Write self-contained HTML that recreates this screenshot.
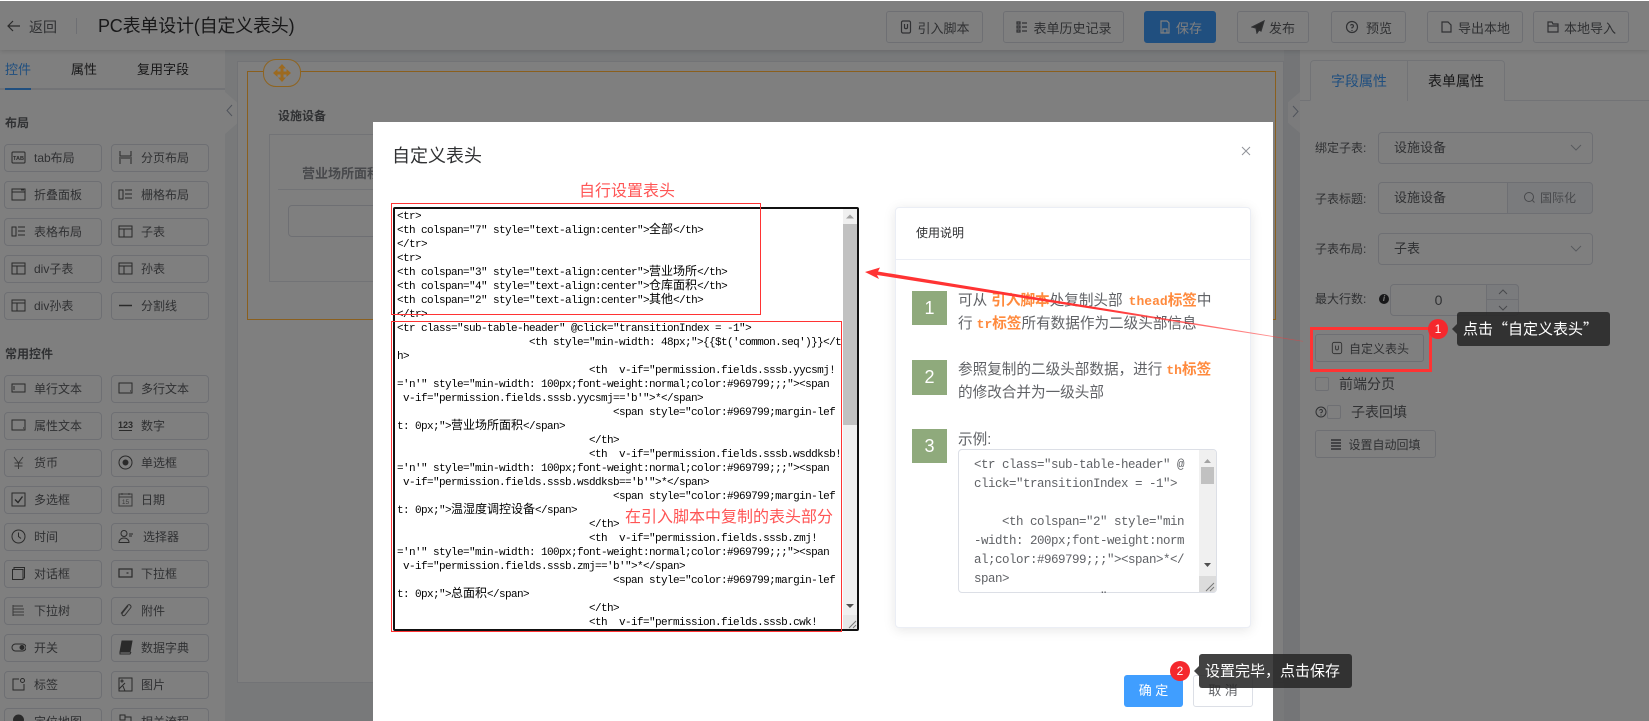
<!DOCTYPE html>
<html lang="zh">
<head>
<meta charset="utf-8">
<title>PC表单设计</title>
<style>
*{box-sizing:border-box}
html,body{margin:0;padding:0;width:1649px;height:721px;overflow:hidden;background:#f0f2f5}
body{position:relative;font-family:"Liberation Sans","Noto Sans CJK SC",sans-serif;color:#606266;font-size:12px}
.a{position:absolute;white-space:nowrap}
.hb{position:absolute;top:11px;height:32px;border:1px solid #dcdfe6;border-radius:3px;background:#fff;display:flex;align-items:center;justify-content:center;font-size:13px;color:#606266;white-space:nowrap}
.hb svg{width:14px;height:14px;margin-right:4px;fill:none;stroke:#606266;stroke-width:1.2}
.it{position:absolute;width:98px;height:28px;border:1px solid #dcdfe6;border-radius:4px;background:#fff;font-size:12px;line-height:27px;padding-left:29px;color:#606266;white-space:nowrap}
.it svg{position:absolute;left:6px;top:5px;width:15px;height:15px;fill:none;stroke:#555;stroke-width:1}
.inp{position:absolute;border:1px solid #dcdfe6;border-radius:4px;background:#fff;height:32px;font-size:13px;line-height:30px;padding-left:15px;color:#606266;white-space:nowrap}
.lb{position:absolute;left:1315px;font-size:12px;color:#606266;white-space:nowrap;line-height:16px}
.btn{position:absolute;border:1px solid #dcdfe6;border-radius:3px;background:#fff;height:28px;font-size:12px;color:#606266;display:flex;align-items:center;justify-content:center;white-space:nowrap}
#ov{position:absolute;left:0;top:1px;width:1649px;height:720px;background:rgba(0,0,0,.5);z-index:10}
#modal{position:absolute;left:373px;top:122px;width:900px;height:600px;background:#fff;z-index:20}
.ta{position:absolute;left:397px;top:210px;z-index:21;font-family:"Liberation Mono",monospace;font-size:11px;letter-spacing:-.6px;color:#000;width:446px;height:419px;overflow:hidden}
.ta div{height:14px;line-height:14px;white-space:pre}
.c{font-family:"Liberation Sans","Noto Sans CJK SC",sans-serif;font-size:12px;letter-spacing:0;line-height:0}
.ex{position:absolute;left:974px;top:456px;z-index:22;font-family:"Liberation Mono",monospace;font-size:12.5px;letter-spacing:-.5px;color:#606266;height:137px;overflow:hidden;width:224px}
.ex div{height:19px;line-height:19px;white-space:pre}
.sq{position:absolute;left:912px;width:35px;height:34px;background:#8faa7c;color:#fff;font-size:18px;text-align:center;line-height:34px;z-index:22}
.st{position:absolute;left:958px;font-size:14.6px;line-height:24px;color:#606266;white-space:nowrap;z-index:22}
.o{color:#ff8a3d;font-weight:bold}
.om{color:#ff8a3d;font-weight:bold;font-family:"Liberation Mono",monospace;font-size:13px;line-height:0}
.rb{position:absolute;border:1px solid #f33;z-index:25}
.red{position:absolute;color:#f55;font-size:16px;white-space:nowrap;z-index:26;line-height:20px}
.bd{position:absolute;width:20px;height:20px;border-radius:50%;background:#f5282d;color:#fff;font-size:12px;line-height:20px;text-align:center;z-index:32}
.tip{position:absolute;height:34px;background:rgba(40,40,40,.88);border-radius:3px;color:#fff;font-family:"Noto Sans CJK SC","Liberation Sans",sans-serif;font-size:15px;line-height:33px;white-space:nowrap;z-index:31}
.tip:before{content:"";position:absolute;left:-5px;top:12px;border-style:solid;border-width:5px 5px 5px 0;border-color:transparent rgba(40,40,40,.88) transparent transparent}
</style>
</head>
<body>
<svg width="0" height="0" style="position:absolute">
<defs>
<symbol id="i-rect" viewBox="0 0 15 15"><rect x="1" y="3" width="13" height="8" fill="none" stroke="#555"/><path d="M3 5v4" stroke="#555"/></symbol>
<symbol id="i-multi" viewBox="0 0 15 15"><rect x="1" y="2" width="13" height="10" fill="none" stroke="#555"/><path d="M12 10h1" stroke="#555"/></symbol>
<symbol id="i-tbl" viewBox="0 0 15 15"><path d="M1 2h13v11H1zM1 5h13M6 5v8" fill="none" stroke="#555"/></symbol>
<symbol id="i-list" viewBox="0 0 15 15"><path d="M1 3h4v9H1zM7 3h7M7 7h7M7 11h7" fill="none" stroke="#555"/></symbol>
<symbol id="i-page" viewBox="0 0 15 15"><path d="M2 1v5h11V1M1 8h13M2 14V9M13 14V9" fill="none" stroke="#555"/></symbol>
<symbol id="i-fold" viewBox="0 0 15 15"><path d="M1 2h13v11H1zM1 5h13" fill="none" stroke="#555"/><path d="M10 3h3" stroke="#555"/></symbol>
<symbol id="i-doc" viewBox="0 0 15 15"><rect x="2.500" y="1.500" width="10" height="12" rx="2" fill="none" stroke="#666"/><path d="M6 5v3c0 2 3 2 3 0V5" fill="none" stroke="#666"/></symbol>
</defs>
</svg>

<!-- top bar -->
<div class="a" style="left:0;top:0;width:1649px;height:1px;background:#fff;z-index:40"></div>
<div class="a" style="left:0;top:1px;width:1649px;height:49px;background:#fff;box-shadow:0 1px 5px rgba(0,0,0,.15);z-index:3"></div>
<div style="position:absolute;z-index:4;left:0;top:0">
<svg class="a" style="left:7px;top:19px" width="14" height="14" viewBox="0 0 14 14" fill="none" stroke="#555" stroke-width="1.2"><path d="M13 7H1M6 2L1 7l5 5"/></svg>
<div class="a" style="left:29px;top:17px;font-size:14px;line-height:20px;color:#606266">返回</div>
<div class="a" style="left:76px;top:18px;width:1px;height:16px;background:#dcdfe6"></div>
<div class="a" style="left:98px;top:14px;font-size:18px;line-height:25px;letter-spacing:-.2px;color:#303133">PC表单设计(自定义表头)</div>
<div class="hb" style="left:886px;width:97px"><svg viewBox="0 0 14 14"><rect x="2.500" y="1" width="9" height="12" rx="1.500"/><path d="M5.500 4v3.500c0 1.500 3 1.500 3 0V4"/></svg>引入脚本</div>
<div class="hb" style="left:1003px;width:121px"><svg viewBox="0 0 14 14"><path d="M2 2h3v2H2zM2 6h3v2H2zM2 10h3v2H2zM7 3h5M7 7h5M7 11h5"/></svg>表单历史记录</div>
<div class="hb" style="left:1144px;width:72px;background:#409eff;border-color:#409eff;color:#fff"><svg viewBox="0 0 14 14" style="stroke:#fff"><path d="M3 1h6l2 2v10H3zM5 9h4v4H5z"/></svg>保存</div>
<div class="hb" style="left:1237px;width:72px"><svg viewBox="0 0 14 14" style="fill:#555"><path d="M13 1L1 7l4 1 1 5 2-3 2 1z"/></svg>发布</div>
<div class="hb" style="left:1331px;width:75px"><svg viewBox="0 0 14 14" style="margin-right:7px"><circle cx="7" cy="7" r="5.500"/><path d="M5.500 5.500a1.500 1.500 0 1 1 1.500 2v1M7 10v1"/></svg>预览</div>
<div class="hb" style="left:1427px;width:96px"><svg viewBox="0 0 14 14"><path d="M2 2h6l3 3v7H2z"/></svg>导出本地</div>
<div class="hb" style="left:1533px;width:96px"><svg viewBox="0 0 14 14"><path d="M2 2h4l1 2h5v8H2zM2 6h10"/></svg>本地导入</div>
</div>

<!-- sidebar -->
<div class="a" style="left:0;top:50px;width:225px;height:671px;background:#fff"></div>
<div class="a" style="left:5px;top:61px;font-size:13px;line-height:18px;color:#409eff">控件</div>
<div class="a" style="left:71px;top:61px;font-size:13px;line-height:18px;color:#303133">属性</div>
<div class="a" style="left:137px;top:61px;font-size:13px;line-height:18px;color:#303133">复用字段</div>
<div class="a" style="left:0;top:88px;width:225px;height:2px;background:#e4e7ed"></div>
<div class="a" style="left:5px;top:88px;width:26px;height:2px;background:#409eff"></div>
<div class="a" style="left:5px;top:114px;font-size:12px;line-height:18px;font-weight:bold;color:#606266">布局</div>
<div class="a" style="left:5px;top:345px;font-size:12px;line-height:18px;font-weight:bold;color:#606266">常用控件</div>

<div class="it" style="left:4px;top:144px"><svg viewBox="0 0 15 15"><rect x="1" y="2" width="13" height="11" rx="1"/><text x="7.500" y="10" font-size="5.500" font-weight="bold" text-anchor="middle" fill="#555" stroke="none" font-family="Liberation Sans">TAB</text></svg>tab布局</div>
<div class="it" style="left:111px;top:144px"><svg><use href="#i-page"/></svg>分页布局</div>
<div class="it" style="left:4px;top:181px"><svg><use href="#i-fold"/></svg>折叠面板</div>
<div class="it" style="left:111px;top:181px"><svg><use href="#i-list"/></svg>栅格布局</div>
<div class="it" style="left:4px;top:218px"><svg><use href="#i-list"/></svg>表格布局</div>
<div class="it" style="left:111px;top:218px"><svg><use href="#i-tbl"/></svg>子表</div>
<div class="it" style="left:4px;top:255px"><svg><use href="#i-tbl"/></svg>div子表</div>
<div class="it" style="left:111px;top:255px"><svg><use href="#i-tbl"/></svg>孙表</div>
<div class="it" style="left:4px;top:292px"><svg><use href="#i-tbl"/></svg>div孙表</div>
<div class="it" style="left:111px;top:292px"><svg viewBox="0 0 15 15"><path d="M1 7.500h13" stroke-width="1.500"/></svg>分割线</div>

<div class="it" style="left:4px;top:375px"><svg><use href="#i-rect"/></svg>单行文本</div>
<div class="it" style="left:111px;top:375px"><svg><use href="#i-multi"/></svg>多行文本</div>
<div class="it" style="left:4px;top:412px"><svg><use href="#i-multi"/></svg>属性文本</div>
<div class="it" style="left:111px;top:412px"><svg viewBox="0 0 15 15"><text x="7.500" y="10" font-size="9" font-weight="bold" text-anchor="middle" fill="#555" stroke="none" font-family="Liberation Sans">123</text><path d="M1 12.500h13"/></svg>数字</div>
<div class="it" style="left:4px;top:449px"><svg viewBox="0 0 15 15"><path d="M3 2l4.500 6L12 2M7.500 8v6M3.500 8h8M3.500 11h8" stroke="#777"/></svg>货币</div>
<div class="it" style="left:111px;top:449px"><svg viewBox="0 0 15 15"><circle cx="7.500" cy="7.500" r="6.500"/><circle cx="7.500" cy="7.500" r="2.500" fill="#555"/></svg>单选框</div>
<div class="it" style="left:4px;top:486px"><svg viewBox="0 0 15 15"><rect x="1" y="1" width="13" height="13"/><path d="M4 7.500l3 3 4.500-6" stroke-width="1.400"/></svg>多选框</div>
<div class="it" style="left:111px;top:486px"><svg viewBox="0 0 15 15"><rect x="1" y="2" width="13" height="12" stroke="#777"/><path d="M1 5h13M4 1v2M11 1v2" stroke="#777"/><text x="7.500" y="12" font-size="6.500" text-anchor="middle" fill="#777" stroke="none" font-family="Liberation Sans">15</text></svg>日期</div>
<div class="it" style="left:4px;top:523px"><svg viewBox="0 0 15 15"><circle cx="7.500" cy="7.500" r="6.500"/><path d="M7.500 3.500v4l2.500 2"/></svg>时间</div>
<div class="it" style="left:111px;top:523px;padding-left:31px"><svg viewBox="0 0 15 15"><circle cx="6" cy="4.500" r="3"/><path d="M1 13.500c0-6 10-6 10 0zM11 5h4M11 7h3"/></svg>选择器</div>
<div class="it" style="left:4px;top:560px"><svg viewBox="0 0 15 15"><path d="M1.500 3.500h10.500v10H1.500zM3 3V1.500h10.500V12H12"/></svg>对话框</div>
<div class="it" style="left:111px;top:560px"><svg viewBox="0 0 15 15"><rect x="1" y="3" width="13" height="8" stroke-width="1.200"/><path d="M8.500 7h2" stroke-width="1.200"/></svg>下拉框</div>
<div class="it" style="left:4px;top:597px"><svg viewBox="0 0 15 15"><path d="M2 2v11M2 3h10M5 6h8M5 9h8M5 12h8M2 6h3M2 9h3M2 12h3" stroke="#777"/></svg>下拉树</div>
<div class="it" style="left:111px;top:597px"><svg viewBox="0 0 15 15"><path d="M10 3L4.500 10c-1.500 2 1 3.500 2.500 2L12.500 5C14 3 11.500 .5 9.500 2.500L3 10.500" stroke="#666"/></svg>附件</div>
<div class="it" style="left:4px;top:634px"><svg viewBox="0 0 15 15"><rect x="1" y="4" width="14" height="7" rx="3.500"/><circle cx="11" cy="7.500" r="2" fill="#555"/></svg>开关</div>
<div class="it" style="left:111px;top:634px"><svg viewBox="0 0 15 15"><path d="M4 1h10l-2 11H2z" fill="#555"/><path d="M2 12v2h10l1-2"/></svg>数据字典</div>
<div class="it" style="left:4px;top:671px"><svg viewBox="0 0 15 15"><path d="M8 2H2v11h11V7"/><circle cx="11.500" cy="3.500" r="2"/></svg>标签</div>
<div class="it" style="left:111px;top:671px"><svg viewBox="0 0 15 15"><rect x="1" y="1" width="13" height="13"/><path d="M1 12l6-6M7 14l-2-5"/><circle cx="4" cy="4" r="1"/></svg>图片</div>
<div class="it" style="left:4px;top:708px"><svg viewBox="0 0 15 15"><path d="M7.500 1a5 5 0 0 0-5 5c0 3 5 8 5 8s5-5 5-8a5 5 0 0 0-5-5z" fill="#555"/></svg>定位地图</div>
<div class="it" style="left:111px;top:708px"><svg viewBox="0 0 15 15"><rect x="2" y="1" width="5" height="5"/><path d="M7 3h6v8"/></svg>相关流程</div>

<div class="a" style="left:225px;top:92px;width:12px;height:42px;background:#fff;clip-path:polygon(0 0,100% 25%,100% 75%,0 100%)"></div>
<svg class="a" style="left:226px;top:104px" width="8" height="13" viewBox="0 0 8 13" fill="none" stroke="#a0a8b8"><path d="M6 1L1 6.500 6 12"/></svg>

<!-- canvas -->
<div class="a" style="left:237px;top:61px;width:1047px;height:622px;background:#fff;border:1px solid #e4e7ed"></div>
<div class="a" style="left:278px;top:107px;font-size:12px;font-weight:bold;line-height:18px;color:#606266">设施设备</div>
<div class="a" style="left:269px;top:134px;width:400px;height:148px;border:1px solid #e4e7ed"></div>
<div class="a" style="left:302px;top:165px;font-size:13px;line-height:18px;color:#909399;font-weight:bold">营业场所面积</div>
<div class="a" style="left:278px;top:189px;width:380px;height:1px;background:#e4e7ed"></div>
<div class="a" style="left:288px;top:205px;width:300px;height:32px;border:1px solid #dcdfe6;border-radius:4px"></div>

<!-- right panel -->
<div class="a" style="left:1284px;top:50px;width:16px;height:671px;background:#e8eaee"></div>
<div class="a" style="left:1300px;top:50px;width:349px;height:671px;background:#fff"></div>
<div class="a" style="left:1288px;top:92px;width:12px;height:41px;background:#f6f7f9;clip-path:polygon(0 25%,100% 0,100% 100%,0 75%)"></div>
<svg class="a" style="left:1291px;top:105px" width="8" height="13" viewBox="0 0 8 13" fill="none" stroke="#a0a8b8"><path d="M2 1l5 5.500L2 12"/></svg>
<div class="a" style="left:1300px;top:100px;width:349px;height:1px;background:#e4e7ed"></div>
<div class="a" style="left:1310px;top:60px;width:98px;height:41px;border:1px solid #e4e7ed;border-bottom:1px solid #fff;border-radius:4px 0 0 0;background:#fff;text-align:center;font-size:14px;line-height:40px;color:#409eff">字段属性</div>
<div class="a" style="left:1407px;top:60px;width:98px;height:41px;border:1px solid #e4e7ed;border-bottom:0;border-radius:0 4px 0 0;background:#fff;text-align:center;font-size:14px;line-height:40px;color:#303133">表单属性</div>

<div class="lb" style="top:140px">绑定子表:</div>
<div class="inp" style="left:1378px;top:132px;width:215px">设施设备</div>
<svg class="a" style="left:1570px;top:144px" width="12" height="8" viewBox="0 0 12 8" fill="none" stroke="#b0b4bc"><path d="M1 1l5 5 5-5"/></svg>
<div class="lb" style="top:191px">子表标题:</div>
<div class="inp" style="left:1378px;top:182px;width:215px">设施设备</div>
<div class="a" style="left:1507px;top:182px;width:86px;height:32px;background:#f5f7fa;border:1px solid #dcdfe6;border-radius:0 4px 4px 0;font-size:12px;line-height:30px;color:#909399;padding-left:32px">国际化</div>
<svg class="a" style="left:1523px;top:191px" width="13" height="13" viewBox="0 0 13 13" fill="none" stroke="#909399"><circle cx="6" cy="6" r="4.500"/><path d="M9.500 9.500l2 2"/></svg>
<div class="lb" style="top:241px">子表布局:</div>
<div class="inp" style="left:1378px;top:233px;width:215px">子表</div>
<svg class="a" style="left:1570px;top:245px" width="12" height="8" viewBox="0 0 12 8" fill="none" stroke="#b0b4bc"><path d="M1 1l5 5 5-5"/></svg>
<div class="lb" style="top:291px">最大行数:</div>
<div class="a" style="left:1379px;top:294px;width:10px;height:10px;border-radius:50%;background:#303133;color:#fff;font-size:8px;line-height:10px;text-align:center;font-weight:bold;font-style:italic">i</div>
<div class="inp" style="left:1390px;top:284px;width:129px;padding:0;text-align:center;font-size:14px;padding-right:32px">0</div>
<div class="a" style="left:1486px;top:284px;width:33px;height:16px;border:1px solid #dcdfe6;background:#f5f7fa;border-radius:0 4px 0 0"></div>
<svg class="a" style="left:1498px;top:289px" width="10" height="6" viewBox="0 0 10 6" fill="none" stroke="#909399"><path d="M1 5l4-4 4 4"/></svg>
<div class="a" style="left:1486px;top:300px;width:33px;height:16px;border:1px solid #dcdfe6;border-top:0;background:#f5f7fa;border-radius:0 0 4px 0"></div>
<svg class="a" style="left:1498px;top:305px" width="10" height="6" viewBox="0 0 10 6" fill="none" stroke="#909399"><path d="M1 1l4 4 4-4"/></svg>

<div class="btn" style="left:1315px;top:334px;width:109px"><svg width="14" height="14" viewBox="0 0 15 15" style="margin-right:5px"><use href="#i-doc"/></svg>自定义表头</div>
<div class="a" style="left:1315px;top:377px;width:14px;height:14px;border:1px solid #dcdfe6;border-radius:2px;background:#fff"></div>
<div class="a" style="left:1339px;top:374px;font-size:14px;line-height:20px;color:#606266">前端分页</div>
<svg class="a" style="left:1315px;top:406px" width="12" height="12" viewBox="0 0 12 12" fill="none" stroke="#606266"><circle cx="6" cy="6" r="5"/><path d="M4.500 4.500a1.500 1.500 0 1 1 1.500 2v.8M6 8.500v1"/></svg>
<div class="a" style="left:1327px;top:405px;width:14px;height:14px;border:1px solid #dcdfe6;border-radius:2px;background:#fff"></div>
<div class="a" style="left:1351px;top:402px;font-size:14px;line-height:20px;color:#606266">子表回填</div>
<div class="btn" style="left:1315px;top:430px;width:121px"><svg width="12" height="12" viewBox="0 0 12 12" style="margin-right:6px" fill="none" stroke="#606266" stroke-width="1.500"><path d="M1 2h10M1 5h10M1 8h10M1 11h10"/></svg>设置自动回填</div>

<!-- overlay -->
<div id="ov"></div>

<!-- gold selection frame (kept above the overlay with its dimmed colour) -->
<div class="a" style="left:247px;top:71px;width:1029px;height:249px;border:1px solid #8a5f1e;z-index:11"></div>
<div class="a" style="left:263px;top:59px;width:38px;height:28px;background:#808080;border:1px solid #8f6420;border-radius:13px;z-index:11"></div>
<svg class="a" style="left:273px;top:64px;z-index:11" width="18" height="18" viewBox="0 0 18 18" fill="#9c6a20"><path d="M9 0l4 4.500h-2.500V7.500h3V5L18 9l-4.500 4v-2.500h-3v3H13L9 18l-4-4.500h2.500v-3h-3V13L0 9l4.500-4v2.500h3v-3H5z"/></svg>

<!-- modal -->
<div id="modal"></div>
<div class="a" style="left:392px;top:144px;font-size:18px;line-height:25px;color:#303133;z-index:21">自定义表头</div>
<svg class="a" style="left:1241px;top:146px;z-index:21" width="10" height="10" viewBox="0 0 10 10" fill="none" stroke="#909399"><path d="M1 1l8 8M9 1l-8 8"/></svg>

<!-- textarea -->
<div class="a" style="left:393px;top:207px;width:466px;height:424px;border:2px solid #111;border-radius:2px;background:#fff;z-index:20"></div>
<div class="a" style="left:843px;top:209px;width:14px;height:420px;background:#f0f0f0;z-index:21"></div>
<div class="a" style="left:843px;top:224px;width:14px;height:201px;background:#c1c1c1;z-index:22"></div>
<svg class="a" style="left:843px;top:209px;z-index:22" width="14" height="15" viewBox="0 0 14 15" fill="#a3a3a3"><path d="M3 9.500l4-4 4 4z"/></svg>
<svg class="a" style="left:843px;top:600px;z-index:22" width="14" height="15" viewBox="0 0 14 15" fill="#505050"><path d="M3 4h8l-4 4z"/></svg>
<div class="a" style="left:843px;top:615px;width:14px;height:14px;background:#e6e6e6;z-index:22"></div>
<svg class="a" style="left:843px;top:615px;z-index:23" width="14" height="14" viewBox="0 0 14 14" stroke="#777" fill="none"><path d="M13 6l-7 7M13 10l-3 3"/></svg>

<div class="ta">
<div>&lt;tr&gt;</div>
<div>&lt;th colspan="7" style="text-align:center"&gt;<span class="c">全部</span>&lt;/th&gt;</div>
<div>&lt;/tr&gt;</div>
<div>&lt;tr&gt;</div>
<div>&lt;th colspan="3" style="text-align:center"&gt;<span class="c">营业场所</span>&lt;/th&gt;</div>
<div>&lt;th colspan="4" style="text-align:center"&gt;<span class="c">仓库面积</span>&lt;/th&gt;</div>
<div>&lt;th colspan="2" style="text-align:center"&gt;<span class="c">其他</span>&lt;/th&gt;</div>
<div>&lt;/tr&gt;</div>
<div>&lt;tr class="sub-table-header" @click="transitionIndex = -1"&gt;</div>
<div>                      &lt;th style="min-width: 48px;"&gt;{{$t('common.seq')}}&lt;/t</div>
<div>h&gt;</div>
<div>                                &lt;th  v-if="permission.fields.sssb.yycsmj!</div>
<div>='n'" style="min-width: 100px;font-weight:normal;color:#969799;;;"&gt;&lt;span</div>
<div> v-if="permission.fields.sssb.yycsmj=='b'"&gt;*&lt;/span&gt;</div>
<div>                                    &lt;span style="color:#969799;margin-lef</div>
<div>t: 0px;"&gt;<span class="c">营业场所面积</span>&lt;/span&gt;</div>
<div>                                &lt;/th&gt;</div>
<div>                                &lt;th  v-if="permission.fields.sssb.wsddksb!</div>
<div>='n'" style="min-width: 100px;font-weight:normal;color:#969799;;;"&gt;&lt;span</div>
<div> v-if="permission.fields.sssb.wsddksb=='b'"&gt;*&lt;/span&gt;</div>
<div>                                    &lt;span style="color:#969799;margin-lef</div>
<div>t: 0px;"&gt;<span class="c">温湿度调控设备</span>&lt;/span&gt;</div>
<div>                                &lt;/th&gt;</div>
<div>                                &lt;th  v-if="permission.fields.sssb.zmj!</div>
<div>='n'" style="min-width: 100px;font-weight:normal;color:#969799;;;"&gt;&lt;span</div>
<div> v-if="permission.fields.sssb.zmj=='b'"&gt;*&lt;/span&gt;</div>
<div>                                    &lt;span style="color:#969799;margin-lef</div>
<div>t: 0px;"&gt;<span class="c">总面积</span>&lt;/span&gt;</div>
<div>                                &lt;/th&gt;</div>
<div>                                &lt;th  v-if="permission.fields.sssb.cwk!</div>
</div>

<!-- usage card -->
<div class="a" style="left:895px;top:207px;width:356px;height:421px;background:#fff;border:1px solid #ebeef5;border-radius:4px;box-shadow:0 2px 12px rgba(0,0,0,.1);z-index:20"></div>
<div class="a" style="left:895px;top:259px;width:356px;height:1px;background:#ebeef5;z-index:21"></div>
<div class="a" style="left:916px;top:225px;font-size:12px;line-height:17px;color:#303133;z-index:21">使用说明</div>
<div class="sq" style="top:291px">1</div>
<div class="sq" style="top:360px;height:35px">2</div>
<div class="sq" style="top:429px">3</div>
<div class="st" style="top:289px">可从 <span class="o">引入脚本</span>处复制头部 <span class="om" style="margin-left:2px">thead</span><span class="o">标签</span>中</div>
<div class="st" style="top:312px">行 <span class="om">tr</span><span class="o">标签</span>所有数据作为二级头部信息</div>
<div class="st" style="top:358px">参照复制的二级头部数据，进行 <span class="om">th</span><span class="o">标签</span></div>
<div class="st" style="top:381px">的修改合并为一级头部</div>
<div class="st" style="top:428px">示例:</div>

<div class="a" style="left:958px;top:449px;width:259px;height:144px;border:1px solid #dcdfe6;border-radius:4px;background:#fff;z-index:21;overflow:hidden">
<div class="a" style="left:240px;top:0;width:17px;height:142px;background:#f0f0f0"></div>
<div class="a" style="left:242px;top:17px;width:13px;height:17px;background:#c1c1c1"></div>
<div class="a" style="left:240px;top:126px;width:17px;height:17px;background:#dcdcdc"></div>
<svg class="a" style="left:240px;top:6px" width="17" height="12" viewBox="0 0 17 12" fill="#a3a3a3"><path d="M5 7l3.500-4L12 7z"/></svg>
<svg class="a" style="left:240px;top:110px" width="17" height="12" viewBox="0 0 17 12" fill="#505050"><path d="M5 3h7L8.500 7z"/></svg>
<svg class="a" style="left:240px;top:126px" width="17" height="17" viewBox="0 0 17 17" fill="none" stroke="#777"><path d="M15 7l-8 8M15 11l-4 4"/></svg>
</div>
<div class="ex">
<div>&lt;tr class="sub-table-header" @</div>
<div>click="transitionIndex = -1"&gt;</div>
<div> </div>
<div>    &lt;th colspan="2" style="min</div>
<div>-width: 200px;font-weight:norm</div>
<div>al;color:#969799;;;"&gt;&lt;span&gt;*&lt;/</div>
<div>span&gt;</div>
<div>                  "</div>
</div>

<!-- dialog buttons -->
<div class="a" style="left:1124px;top:675px;width:59px;height:32px;background:#409eff;border-radius:3px;color:#fff;font-size:13px;line-height:32px;text-align:center;z-index:21">确 定</div>
<div class="a" style="left:1193px;top:675px;width:60px;height:32px;background:#fff;border:1px solid #dcdfe6;border-radius:3px;color:#606266;font-size:13px;line-height:30px;text-align:center;z-index:21">取 消</div>

<!-- annotations -->
<div class="red" style="left:579px;top:182px">自行设置表头</div>
<div class="rb" style="left:391px;top:203px;width:370px;height:112px"></div>
<div class="rb" style="left:391px;top:321px;width:451px;height:311px"></div>
<div class="red" style="left:625px;top:508px">在引入脚本中复制的表头部分</div>

<svg class="a" style="left:0;top:0;z-index:30;pointer-events:none" width="1649" height="721" viewBox="0 0 1649 721">
<defs><linearGradient id="fade" gradientUnits="userSpaceOnUse" x1="1100" y1="0" x2="1303" y2="0"><stop offset="0" stop-color="#f33"/><stop offset="1" stop-color="#f33" stop-opacity=".45"/></linearGradient></defs>
<polygon points="865,272 880,267.500 878,271.500 1303,341 1303,341.600 1100,310 877,275 879,279" fill="url(#fade)"/>
</svg>

<div class="a" style="left:1310px;top:327px;width:122px;height:45px;border:3px solid #f33;z-index:30"></div>
<div class="bd" style="left:1428px;top:319px">1</div>
<div class="tip" style="left:1457px;top:312px;width:153px;padding-left:6px">点击“自定义表头”</div>
<div class="bd" style="left:1170px;top:661px">2</div>
<div class="tip" style="left:1199px;top:654px;width:153px;padding-left:6px">设置完毕，点击保存</div>
</body>
</html>
